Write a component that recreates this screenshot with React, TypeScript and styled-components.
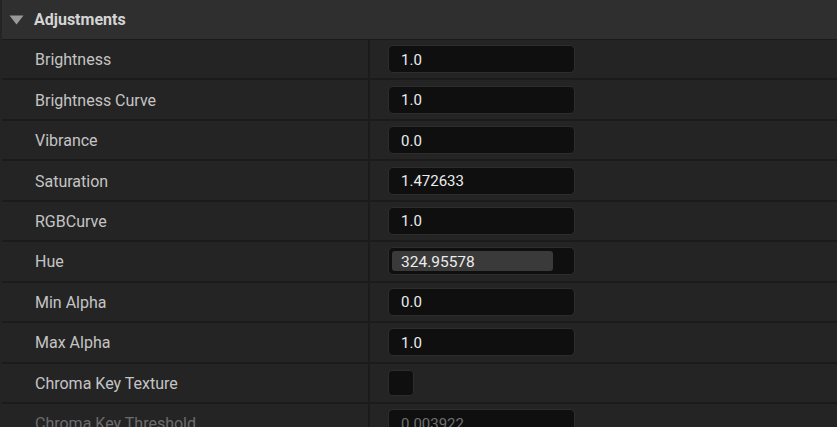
import React from "react";
import styled, { createGlobalStyle } from "styled-components";

const Global = createGlobalStyle`
  html, body { margin: 0; padding: 0; background: #242424; }
  body { font-family: Roboto, "Noto Sans", sans-serif; overflow: hidden; }
`;

const Panel = styled.div`
  width: 837px;
  height: 427px;
  overflow: hidden;
  background: #242424;
  display: flex;
  flex-direction: column;
`;

const Header = styled.div`
  height: 40px;
  flex: none;
  display: flex;
  align-items: center;
  gap: 10px;
  padding-left: 8px;
  box-sizing: border-box;
  background: #2f2f2f;
  border-bottom: 1px solid #1b1b1b;
  margin-left: 2px;
  color: #d4d4d4;
  font-weight: 700;
  font-size: 16px;
`;

const Caret = styled.svg`
  width: 15px;
  height: 10px;
  margin-left: -1px;
`;

const Row = styled.div`
  height: 40.44px;
  flex: none;
  box-sizing: border-box;
  display: grid;
  grid-template-columns: 366px 2px 1fr;
  margin-left: 2px;
  border-bottom: 2px solid #1b1b1b;
`;

const Label = styled.div<{ $disabled?: boolean }>`
  display: flex;
  align-items: center;
  padding-left: 33px;
  padding-top: 1px;
  font-size: 16px;
  color: ${(p) => (p.$disabled ? "#6c6c6c" : "#c4c4c4")};
`;

const Divider = styled.div`
  background: #1b1b1b;
`;

const ValueCell = styled.div`
  display: flex;
  align-items: center;
  padding-left: 18px;
`;

const Input = styled.div<{ $disabled?: boolean }>`
  width: 187px;
  height: 28px;
  box-sizing: border-box;
  border: 1px solid #2d2d2d;
  border-radius: 5px;
  background: #0f0f0f;
  display: flex;
  align-items: center;
  padding-left: 12px;
  padding-top: 1px;
  font-size: 15px;
  color: ${(p) => (p.$disabled ? "#707070" : "#ececec")};
`;

const SliderInput = styled.div`
  width: 187px;
  height: 28px;
  box-sizing: border-box;
  border: 1px solid #2d2d2d;
  border-radius: 5px;
  background: #0f0f0f;
  padding: 3px;
  display: flex;
`;

const SliderFill = styled.div`
  height: 100%;
  background: #3a3a3a;
  border-radius: 3px;
  display: flex;
  align-items: center;
  padding-left: 9px;
  padding-top: 1px;
  box-sizing: border-box;
  font-size: 15.5px;
  color: #ececec;
`;

const Checkbox = styled.div`
  width: 26px;
  height: 26px;
  box-sizing: border-box;
  border: 1px solid #2d2d2d;
  border-radius: 4px;
  background: #0f0f0f;
`;

type Prop =
  | { label: string; kind: "num"; value: string; disabled?: boolean }
  | { label: string; kind: "slider"; value: string; fraction: number }
  | { label: string; kind: "check" };

const props: Prop[] = [
  { label: "Brightness", kind: "num", value: "1.0" },
  { label: "Brightness Curve", kind: "num", value: "1.0" },
  { label: "Vibrance", kind: "num", value: "0.0" },
  { label: "Saturation", kind: "num", value: "1.472633" },
  { label: "RGBCurve", kind: "num", value: "1.0" },
  { label: "Hue", kind: "slider", value: "324.95578", fraction: 0.902 },
  { label: "Min Alpha", kind: "num", value: "0.0" },
  { label: "Max Alpha", kind: "num", value: "1.0" },
  { label: "Chroma Key Texture", kind: "check" },
  { label: "Chroma Key Threshold", kind: "num", value: "0.003922", disabled: true },
];

export default function App() {
  return (
    <Panel>
      <Global />
      <Header>
        <Caret viewBox="0 0 15 10">
          <path d="M0.5 0.5 H14.5 L7.5 9.5 Z" fill="#9a9a9a" />
        </Caret>
        Adjustments
      </Header>
      {props.map((p) => (
        <Row key={p.label}>
          <Label $disabled={p.kind === "num" && p.disabled}>{p.label}</Label>
          <Divider />
          <ValueCell>
            {p.kind === "num" && <Input $disabled={p.disabled}>{p.value}</Input>}
            {p.kind === "slider" && (
              <SliderInput>
                <SliderFill style={{ width: `${p.fraction * 100}%` }}>{p.value}</SliderFill>
              </SliderInput>
            )}
            {p.kind === "check" && <Checkbox />}
          </ValueCell>
        </Row>
      ))}
    </Panel>
  );
}
